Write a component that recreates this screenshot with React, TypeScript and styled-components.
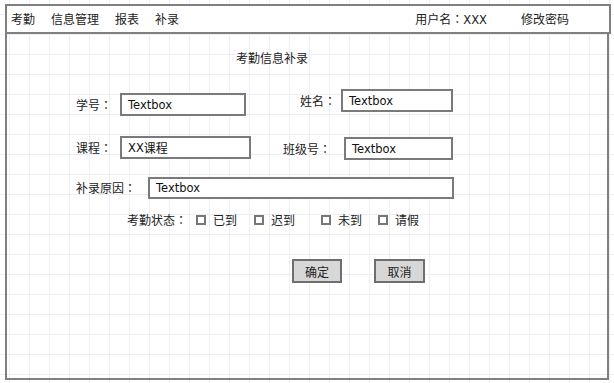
import React from "react";
import styled, { createGlobalStyle } from "styled-components";

const Global = createGlobalStyle`
  html, body { margin: 0; padding: 0; }
  body {
    width: 614px;
    height: 383px;
    overflow: hidden;
    background-color: #ffffff;
    background-image:
      linear-gradient(to right, #eeeef8 1px, transparent 1px),
      linear-gradient(to bottom, #eeeef8 1px, transparent 1px);
    background-size: 20px 20px;
    background-position: 9px 14px;
    font-family: "Noto Sans CJK SC", "Liberation Sans", sans-serif;
    color: #222;
    font-size: 12px;
  }
`;

const Frame = styled.div`
  display: flex;
  flex-direction: column;
  padding: 4px 3px 3px 5px;
  height: 383px;
  box-sizing: border-box;
`;

const Header = styled.div`
  height: 30px;
  box-sizing: border-box;
  border: 2px solid #808080;
  display: flex;
  align-items: center;
  padding: 0 40px 0 4px;
  background: rgba(255, 255, 255, 0.85);
`;

const NavGroup = styled.div<{ $gap: number }>`
  display: flex;
  align-items: center;
  gap: ${(p) => p.$gap}px;
`;

const Spacer = styled.div`
  flex: 1;
`;

const NavItem = styled.span`
  font-size: 12px;
  line-height: 16px;
  white-space: nowrap;
`;

const Latin = styled.span`
  font-family: "DejaVu Sans", "Liberation Sans", sans-serif;
  font-size: 11.5px;
`;

const Colon = styled.span`
  font-family: "Noto Sans CJK TC", "Noto Sans CJK SC", sans-serif;
`;

const Content = styled.div`
  flex: 1;
  margin-right: 2px;
  border: 2px solid #808080;
  border-top: none;
  display: flex;
  flex-direction: column;
  padding: 16px 0 0 69px;
`;

const Title = styled.div`
  margin-left: 160px;
  font-size: 12px;
  line-height: 16px;
`;

const Row = styled.div<{ $top: number }>`
  display: flex;
  align-items: flex-start;
  margin-top: ${(p) => p.$top}px;
`;

const Field = styled.div<{ $top?: number; $left?: number }>`
  display: flex;
  align-items: center;
  margin-top: ${(p) => p.$top ?? 0}px;
  margin-left: ${(p) => p.$left ?? 0}px;
`;

const Label = styled.span<{ $w: number }>`
  width: ${(p) => p.$w}px;
  font-size: 12px;
  line-height: 16px;
  white-space: nowrap;
`;

const TextBox = styled.div<{ $w: number; $h: number }>`
  width: ${(p) => p.$w}px;
  height: ${(p) => p.$h}px;
  box-sizing: border-box;
  border: 2px solid #7a7a7a;
  background: #fff;
  display: flex;
  align-items: center;
  padding-left: 6px;
  font-family: "DejaVu Sans", "Liberation Sans", "Noto Sans CJK SC", sans-serif;
  font-size: 11.5px;
  color: #111;
  white-space: nowrap;
`;

const Cjk = styled.span`
  font-family: "Noto Sans CJK SC", sans-serif;
  font-size: 12px;
`;

const StatusRow = styled.div`
  display: flex;
  align-items: center;
  margin-top: 13px;
  margin-left: 51px;
  height: 16px;
`;

const Option = styled.label<{ $left: number }>`
  display: flex;
  align-items: center;
  gap: 7px;
  margin-left: ${(p) => p.$left}px;
  font-size: 12px;
  line-height: 16px;
`;

const CheckBox = styled.span`
  width: 10px;
  height: 10px;
  box-sizing: border-box;
  border: 2px solid #777;
  background: #fff;
`;

const ButtonRow = styled.div`
  display: flex;
  gap: 32px;
  margin-top: 31px;
  margin-left: 216px;
`;

const Button = styled.button<{ $w: number }>`
  width: ${(p) => p.$w}px;
  height: 24px;
  box-sizing: border-box;
  border: 2px solid #6f6f6f;
  background: #d7d7d7;
  font-family: "Noto Sans CJK SC", sans-serif;
  font-size: 12px;
  color: #222;
  padding: 0;
  display: flex;
  align-items: center;
  justify-content: center;
`;

export default function App() {
  return (
    <>
      <Global />
      <Frame>
        <Header>
          <NavGroup $gap={16}>
            <NavItem>考勤</NavItem>
            <NavItem>信息管理</NavItem>
            <NavItem>报表</NavItem>
            <NavItem>补录</NavItem>
          </NavGroup>
          <Spacer />
          <NavGroup $gap={34}>
            <NavItem>
              用户名<Colon>：</Colon>
              <Latin>XXX</Latin>
            </NavItem>
            <NavItem>修改密码</NavItem>
          </NavGroup>
        </Header>
        <Content>
          <Title>考勤信息补录</Title>
          <Row $top={23}>
            <Field $top={4}>
              <Label $w={44}>
                学号<Colon>：</Colon>
              </Label>
              <TextBox $w={126} $h={23}>Textbox</TextBox>
            </Field>
            <Field $left={54}>
              <Label $w={41}>
                姓名<Colon>：</Colon>
              </Label>
              <TextBox $w={112} $h={23}>Textbox</TextBox>
            </Field>
          </Row>
          <Row $top={20}>
            <Field>
              <Label $w={44}>
                课程<Colon>：</Colon>
              </Label>
              <TextBox $w={131} $h={23}>
                XX<Cjk>课程</Cjk>
              </TextBox>
            </Field>
            <Field $top={1} $left={32}>
              <Label $w={61}>
                班级号<Colon>：</Colon>
              </Label>
              <TextBox $w={109} $h={23}>Textbox</TextBox>
            </Field>
          </Row>
          <Row $top={17}>
            <Field>
              <Label $w={72}>
                补录原因<Colon>：</Colon>
              </Label>
              <TextBox $w={306} $h={22}>Textbox</TextBox>
            </Field>
          </Row>
          <StatusRow>
            <Label $w={69}>
              考勤状态<Colon>：</Colon>
            </Label>
            <Option $left={0}>
              <CheckBox />
              已到
            </Option>
            <Option $left={17}>
              <CheckBox />
              迟到
            </Option>
            <Option $left={26}>
              <CheckBox />
              未到
            </Option>
            <Option $left={16}>
              <CheckBox />
              请假
            </Option>
          </StatusRow>
          <ButtonRow>
            <Button $w={50}>确定</Button>
            <Button $w={51}>取消</Button>
          </ButtonRow>
        </Content>
      </Frame>
    </>
  );
}
